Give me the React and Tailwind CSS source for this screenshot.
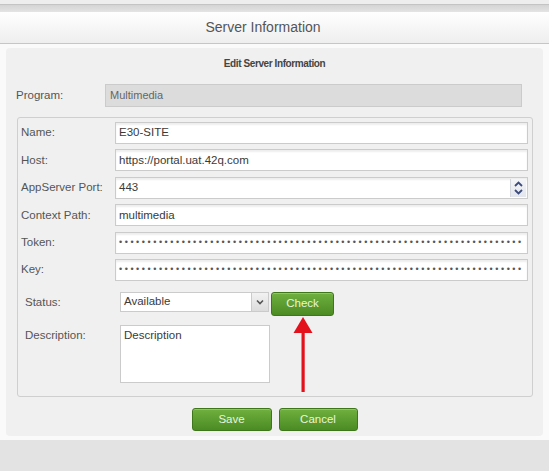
import React from 'react';

const DOTS = '•'.repeat(71);

const FIELDS = [
  { label: 'Name:', value: 'E30-SITE' },
  { label: 'Host:', value: 'https://portal.uat.42q.com' },
  { label: 'AppServer Port:', value: '443', spinner: true },
  { label: 'Context Path:', value: 'multimedia' },
  { label: 'Token:', value: DOTS, secret: true },
  { label: 'Key:', value: DOTS, secret: true },
];

const GreenButton = ({ children, className = '' }) => (
  <button
    type="button"
    className={`rounded-[3px] border border-[#3d7719] bg-gradient-to-b from-[#6fb03f] to-[#4b8b23] text-[11.5px] text-[#e8f5dc] shadow-[inset_0_1px_0_rgba(255,255,255,0.25)] ${className}`}
  >
    {children}
  </button>
);

const Spinner = () => (
  <div className="absolute right-[1px] top-[1px] bottom-[1px] w-[16px] flex flex-col items-center justify-center bg-gradient-to-b from-[#f4f5f8] to-[#e3e6ee] border-l border-[#d4d7de]">
    <svg width="9" height="6" viewBox="0 0 9 6"><path d="M1 5 L4.5 1.5 L8 5" fill="none" stroke="#3b4b7c" strokeWidth="1.8" /></svg>
    <svg width="9" height="6" viewBox="0 0 9 6" className="mt-[2px]"><path d="M1 1 L4.5 4.5 L8 1" fill="none" stroke="#3b4b7c" strokeWidth="1.8" /></svg>
  </div>
);

export default function App() {
  return (
    <div className="w-[549px] h-[471px] bg-[#e3e3e3] font-['Liberation_Sans',Arial,sans-serif] text-[11.5px] text-[#555] overflow-hidden">
      <div className="h-[4px] bg-[#eeeeee]" />
      <div className="h-[8px] border-t border-[#c4c4c4] bg-gradient-to-b from-[#d4d4d4] to-[#e4e4e4]" />
      <div className="h-[32px] border-b border-[#c6c6c6] bg-gradient-to-b from-white to-[#eeeeee] flex items-center justify-center pr-[23px] text-[14px] text-[#555]">
        Server Information
      </div>

      <div className="bg-[#fafafa] px-[6px] py-[4px]">
        <div className="relative h-[388px] rounded-[4px] bg-[#f0f0f0]">
          <div className="h-[30px] flex items-center justify-center text-[10px] font-bold tracking-[-0.4px] text-[#444]">
            Edit Server Information
          </div>

          <div className="mt-[6px] flex items-center pl-[10px]">
            <div className="w-[89px]">Program:</div>
            <div className="h-[23px] w-[417px] flex items-center px-[4px] bg-[#dcdcdc] border border-[#cbcbcb] text-[11px] text-[#666]">
              Multimedia
            </div>
          </div>

          <div className="mt-[10px] ml-[11px] mr-[10px] h-[280px] rounded-[3px] border border-[#cfcfcf] pt-[4px] pl-[3px] pr-[4px]">
            <div className="flex flex-col gap-[5.4px]">
              {FIELDS.map((f) => (
                <div key={f.label} className="flex items-center h-[22px]">
                  <div className="w-[94px] shrink-0">{f.label}</div>
                  <div className="relative flex-1 h-[22px] bg-white border border-[#cbcbcb] shadow-[inset_0_2px_2px_rgba(0,0,0,0.07)] flex items-center px-[3px] overflow-hidden">
                    {f.secret ? (
                      <span className="whitespace-nowrap text-[9px] tracking-[2.55px] text-[#555] leading-none">{f.value}</span>
                    ) : (
                      <span className="text-[11.5px] text-[#3a3a3a] whitespace-nowrap">{f.value}</span>
                    )}
                    {f.spinner && <Spinner />}
                  </div>
                </div>
              ))}
            </div>

            <div className="mt-[11px] pl-[4px]">
              <div className="flex items-start">
                <div className="w-[95px] pt-[2px]">Status:</div>
                <div className="flex items-start">
                  <div className="w-[149px] h-[20px] flex bg-white border border-[#cbcbcb]">
                    <div className="flex-1 flex items-center px-[3px] text-[#3a3a3a]">Available</div>
                    <div className="w-[17px] flex items-center justify-center bg-gradient-to-b from-[#f2f2f2] to-[#dcdcdc] border-l border-[#cbcbcb]">
                      <svg width="8" height="6" viewBox="0 0 8 6"><path d="M1 1.5 L4 4.5 L7 1.5" fill="none" stroke="#555" strokeWidth="1.6" /></svg>
                    </div>
                  </div>
                  <GreenButton className="ml-[2px] w-[63px] h-[24px]">Check</GreenButton>
                </div>
              </div>

              <div className="mt-[9px] flex items-start">
                <div className="w-[95px] pt-[2px]">Description:</div>
                <div className="w-[150px] h-[58px] bg-white border border-[#cbcbcb] px-[3px] pt-[1px] text-[#3a3a3a]">
                  Description
                </div>
              </div>
            </div>
          </div>

          <div className="mt-[11px] flex justify-center gap-[7px]">
            <GreenButton className="w-[80px] h-[23px]">Save</GreenButton>
            <GreenButton className="w-[79px] h-[23px]">Cancel</GreenButton>
          </div>

          <svg className="absolute left-[286px] top-[269px]" width="24" height="76" viewBox="0 0 24 76">
            <path d="M11 0 L20.5 16 L1.5 16 Z" fill="#e3111b" />
            <rect x="9.5" y="14" width="3.2" height="61" fill="#e3111b" />
          </svg>
        </div>
      </div>
    </div>
  );
}
